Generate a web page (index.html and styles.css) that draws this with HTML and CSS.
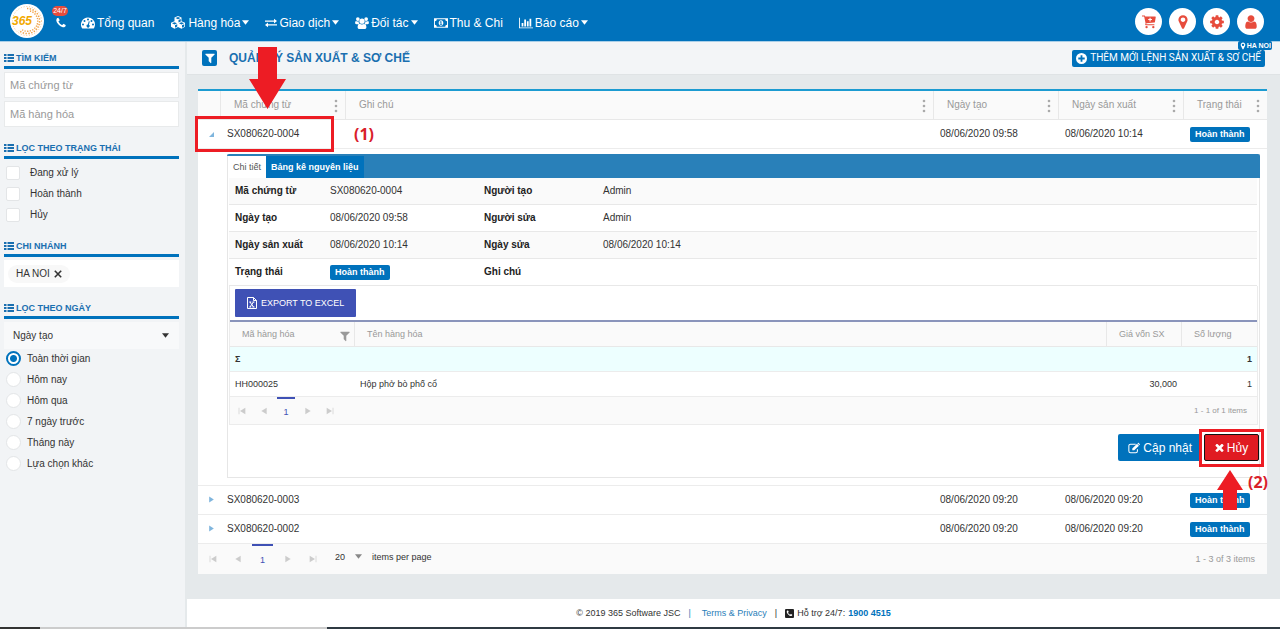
FILE: index.html
```html
<!DOCTYPE html>
<html lang="vi">
<head>
    <meta charset="UTF-8">
    <meta name="viewport" content="width=device-width, initial-scale=1.0">
    <title>Quản lý sản xuất &amp; sơ chế</title>
    <link rel="stylesheet" href="styles.css">
</head>
<body>

<!-- Icons -->
<svg class="sprite" aria-hidden="true">
    <symbol id="i-phone" viewBox="0 0 1792 1792"><path d="M1600 1240q0 27-10 70.5t-21 68.5q-21 50-122 106-94 51-186 51-27 0-53-3.5t-57-12.5-47-14.5-55.5-20.5-49.5-18q-98-35-175-83-127-79-264-216t-216-264q-48-77-83-175-3-9-18-49.5t-20.5-55.5-14.5-47-12.5-57-3.5-53q0-92 51-186 56-101 106-122 25-11 68.5-21t70.5-10q14 0 21 3 18 6 53 76 11 19 30 54t35 63.5 31 53.5q3 4 17.5 25t21.5 35.5 7 28.5q0 20-28.5 50t-62 55-62 53-28.5 46q0 9 5 22.5t8.5 20.5 14 24 11.5 19q76 137 174 235t235 174q2 1 19 11.5t24 14 20.5 8.5 22.5 5q18 0 46-28.5t53-62 55-62 50-28.5q14 0 28.5 7t35.5 21.5 25 17.5q25 15 53.5 31t63.5 35 54 30q70 35 76 53 3 7 3 21z"/></symbol>
    <symbol id="i-marker" viewBox="0 0 1792 1792"><path d="M1152 640q0-106-75-181t-181-75-181 75-75 181 75 181 181 75 181-75 75-181zm256 0q0 109-33 179l-364 774q-16 33-47.5 52t-67.5 19-67.5-19-46.5-52l-365-774q-33-70-33-179 0-212 150-362t362-150 362 150 150 362z"/></symbol>
    <symbol id="i-filter" viewBox="0 0 1792 1792"><path d="M1595 295q17 41-14 70l-493 493v742q0 42-39 59-13 5-25 5-27 0-45-19l-256-256q-19-19-19-45v-486l-493-493q-31-29-14-70 17-39 59-39h1280q42 0 59 39z"/></symbol>
    <symbol id="i-user" viewBox="0 0 1792 1792"><path d="M1536 1399q0 109-62.5 187t-150.5 78h-854q-88 0-150.5-78t-62.5-187q0-85 8.5-160.5t31.5-152 58.5-131 94-89 134.5-34.5q131 128 313 128t313-128q76 0 134.5 34.5t94 89 58.5 131 31.5 152 8.5 160.5zm-256-887q0 159-112.5 271.5t-271.5 112.5-271.5-112.5-112.5-271.5 112.5-271.5 271.5-112.5 271.5 112.5 112.5 271.5z"/></symbol>
    <symbol id="i-cog" viewBox="0 0 1792 1792"><path d="M1152 896q0-106-75-181t-181-75-181 75-75 181 75 181 181 75 181-75 75-181zm512-109v222q0 12-8 23t-20 13l-185 28q-19 54-39 91 35 50 107 138 10 12 10 25t-9 23q-27 37-99 108t-94 71q-12 0-26-9l-138-108q-44 23-91 38-16 136-29 186-7 28-36 28h-222q-14 0-24.5-8.5t-11.5-21.5l-28-184q-49-16-90-37l-141 107q-10 9-25 9-14 0-25-11-126-114-165-168-7-10-7-23 0-12 8-23 15-21 51-66.5t54-70.5q-27-50-41-99l-183-27q-13-2-21-12.5t-8-23.5v-222q0-12 8-23t19-13l186-28q14-46 39-92-40-57-107-138-10-12-10-24 0-10 9-23 26-36 98.5-107.5t94.5-71.5q13 0 26 10l138 107q44-23 91-38 16-136 29-186 7-28 36-28h222q14 0 24.5 8.5t11.5 21.5l28 184q49 16 90 37l142-107q9-9 24-9 13 0 25 10 129 119 165 170 7 8 7 22 0 12-8 23-15 21-51 66.5t-54 70.5q26 50 41 98l183 28q13 2 21 12.5t8 23.5z"/></symbol>
    <symbol id="i-times" viewBox="238 238 1316 1316"><path d="M1490 1322q0 40-28 68l-136 136q-28 28-68 28t-68-28l-294-294-294 294q-28 28-68 28t-68-28l-136-136q-28-28-28-68t28-68l294-294-294-294q-28-28-28-68t28-68l136-136q28-28 68-28t68 28l294 294 294-294q28-28 68-28t68 28l136 136q28 28 28 68t-28 68l-294 294 294 294q28 28 28 68z"/></symbol>
    <symbol id="i-chart" viewBox="0 128 2048 1536"><path d="M640 896v512h-256v-512h256zm384-512v1024h-256v-1024h256zm1024 1152v128h-2048v-1536h128v1408h1920zm-640-896v768h-256v-768h256zm384-384v1152h-256v-1152h256z"/></symbol>
    <symbol id="i-list" viewBox="0 0 20 16"><path d="M0 0h5v4H0zM7 0h13v4H7zM0 6h5v4H0zM7 6h13v4H7zM0 12h5v4H0zM7 12h13v4H7z"/></symbol>
    <symbol id="i-caret" viewBox="0 0 8 5"><path d="M0 0h8L4 5z"/></symbol>
    <symbol id="i-dash" viewBox="0 0 28 24"><path fill-rule="evenodd" d="M14 1a14 14 0 0 1 14 14c0 3-1 5.500-2.200 7.500-.3.400-.7.500-1.200.500H3.400c-.5 0-.9-.1-1.200-.5A14 14 0 0 1 14 1zM4 13a2 2 0 1 0 0 4 2 2 0 0 0 0-4zM7 6a2 2 0 1 0 0 4 2 2 0 0 0 0-4zM14 3a2 2 0 1 0 0 4 2 2 0 0 0 0-4zM21 6a2 2 0 1 0 0 4 2 2 0 0 0 0-4zM24 13a2 2 0 1 0 0 4 2 2 0 0 0 0-4zM15.500 8.500l-1.700 6.500a3 3 0 1 0 2 .5l1.700-6.500z"/></symbol>
    <symbol id="i-cubes" viewBox="0 0 32 28"><path fill-rule="evenodd" d="M16 0l7 3v7.500l7 3v8l-7 4-7-3.500-7 3.500-7-4v-8l7-3V3zM11 4l5 2.300L21 4l-5-2zM17 8v5l4.500-2.200V6zM4 14.500l5 2.300 5-2.300-5-2zM18 14.500l5 2.300 5-2.300-5-2zM10 18.500v5l4.500-2.300v-4.800zM24 18.500v5l4.500-2.300v-4.800z"/></symbol>
    <symbol id="i-exchange" viewBox="0 0 28 20"><path d="M0 4h21V0l7 5.500L21 11V7H0zM28 13H7V9l-7 5.500L7 20v-4h21z"/></symbol>
    <symbol id="i-users" viewBox="0 0 30 26"><circle cx="6" cy="4.500" r="4"/><circle cx="24" cy="4.500" r="4"/><circle cx="15" cy="9" r="5.600"/><path d="M2 8.500c3 1.500 5 1.500 6 .5-.5 3 .5 5 2 6.500H3c-2 0-3-1-3-2.500 0-2 .6-4 2-4.500zM28 8.500c-3 1.500-5 1.500-6 .5.500 3-.5 5-2 6.500h7c2 0 3-1 3-2.500 0-2-.6-4-2-4.500zM10 14.500c3 2 7 2 10 0 3.500.5 4.500 4 4.500 7.500 0 2.500-1.500 4-4 4h-11c-2.500 0-4-1.500-4-4 0-3.500 1-7 4.500-7.500z"/></symbol>
    <symbol id="i-money" viewBox="0 0 30 20"><path fill-rule="evenodd" d="M0 0h30v20H0zM6 2a4 4 0 0 1-4 4v8a4 4 0 0 1 4 4h18a4 4 0 0 1 4-4V6a4 4 0 0 1-4-4zM15 4c3 0 5 3 5 6s-2 6-5 6-5-3-5-6 2-6 5-6zM14 6.500l-2 1.500 1 1 1-.5V12h-1.500v1.500h5V12H16V6.500z"/></symbol>
    <symbol id="i-cart" viewBox="0 0 26 24"><path fill-rule="evenodd" d="M0 0h4.500c1 0 1.300.8 1.500 2h18.500c.8 0 1.200.5 1 1.200l-1.500 8.800c-.1.700-.5 1-1 1L8 14.500 8 16h15v2H7c-1 0-1.500-.8-1-1.700l.7-1.600L4 2H0zM14 4v2.500h-2.500v2H14V11h2V8.500h2.500v-2H16V4z"/><circle cx="8.500" cy="21.500" r="2.200"/><circle cx="21" cy="21.500" r="2.200"/></symbol>
    <symbol id="i-plus" viewBox="0 0 24 24"><path fill-rule="evenodd" d="M12 0a12 12 0 1 1 0 24 12 12 0 0 1 0-24zM10 5v5H5v4h5v5h4v-5h5v-4h-5V5z"/></symbol>
    <symbol id="i-edit" viewBox="0 0 28 24"><path fill="none" stroke="currentColor" stroke-width="2.400" d="M18 3H6a4 4 0 0 0-4 4v12a4 4 0 0 0 4 4h12a4 4 0 0 0 4-4v-4"/><path d="M10 13L21 2l4.500 4.500-11 11H10zM22 1l1-.7c.6-.4 1.300-.4 1.800 0l2.600 2.600c.5.500.5 1.300 0 1.800l-1 1z"/></symbol>
    <symbol id="i-excel" viewBox="0 0 20 24"><path fill="none" stroke="currentColor" stroke-width="2" d="M1 1h12l6 6v16H1zM13 1v6h6M6 10l7 10M13 10L6 20M4.500 10h4M11 10h4M4.500 20h4M11 20h4"/></symbol>
    <symbol id="i-first" viewBox="0 0 12 12"><path d="M1 1h1v10H1zM11 1v10L3 6z"/></symbol>
    <symbol id="i-prev" viewBox="0 0 12 12"><path d="M10 1v10L2 6z"/></symbol>
    <symbol id="i-next" viewBox="0 0 12 12"><path d="M2 1v10l8-5z"/></symbol>
    <symbol id="i-last" viewBox="0 0 12 12"><path d="M10 1h1v10h-1zM1 1v10l8-5z"/></symbol>
    <symbol id="i-open" viewBox="0 0 10 10"><path d="M10 0v10H0z"/></symbol>
    <symbol id="i-dots" viewBox="0 0 4 14"><circle cx="2" cy="2" r="1.300"/><circle cx="2" cy="7" r="1.300"/><circle cx="2" cy="12" r="1.300"/></symbol>
</svg>

<header class="topbar">
    <a class="logo" href="#" aria-label="365">
        <svg viewBox="0 0 34 34">
            <circle cx="17" cy="17" r="17" fill="#fff"/>
            <g fill="none" stroke="#f0a24a">
                <circle cx="17" cy="17" r="14.500" stroke-width="1" stroke-dasharray="1 1.800" opacity=".6"/>
                <path d="M17 4.500a12.500 12.500 0 1 1-8 22" stroke-width="1.500" stroke-dasharray="1.400 1.400"/>
                <path d="M20 7a10.300 10.300 0 1 1-9 18" stroke-width="1.400" stroke-dasharray="1.300 1.300"/>
            </g>
            <text x="2" y="21" class="logo-text">365</text>
        </svg>
    </a>
    <a class="hotline" href="#" aria-label="Hỗ trợ 24/7"><span class="hotline-badge">24/7</span><svg class="icon s12"><use href="#i-phone"/></svg></a>
    <nav class="menu">
        <a href="#"><svg class="icon w14"><use href="#i-dash"/></svg>Tổng quan</a>
        <a href="#"><svg class="icon w16"><use href="#i-cubes"/></svg>Hàng hóa<svg class="icon caret"><use href="#i-caret"/></svg></a>
        <a href="#"><svg class="icon w12"><use href="#i-exchange"/></svg>Giao dịch<svg class="icon caret"><use href="#i-caret"/></svg></a>
        <a href="#"><svg class="icon w14"><use href="#i-users"/></svg>Đối tác<svg class="icon caret"><use href="#i-caret"/></svg></a>
        <a href="#"><svg class="icon w14"><use href="#i-money"/></svg>Thu &amp; Chi</a>
        <a href="#"><svg class="icon w14"><use href="#i-chart"/></svg>Báo cáo<svg class="icon caret"><use href="#i-caret"/></svg></a>
    </nav>
    <div class="tools">
        <button aria-label="Giỏ hàng"><svg class="icon s14"><use href="#i-cart"/></svg></button>
        <button aria-label="Chi nhánh"><svg class="icon s16"><use href="#i-marker"/></svg></button>
        <button aria-label="Cài đặt"><svg class="icon s16"><use href="#i-cog"/></svg></button>
        <button aria-label="Tài khoản"><svg class="icon s16"><use href="#i-user"/></svg></button>
    </div>
    <span class="branch"><svg class="icon s8"><use href="#i-marker"/></svg>HA NOI</span>
</header>

<div class="layout">
    <aside class="sidebar">
        <section>
            <h2><svg class="icon list"><use href="#i-list"/></svg>TÌM KIẾM</h2>
            <input class="field" type="text" placeholder="Mã chứng từ" aria-label="Mã chứng từ">
            <input class="field" type="text" placeholder="Mã hàng hóa" aria-label="Mã hàng hóa">
        </section>
        <section>
            <h2><svg class="icon list"><use href="#i-list"/></svg>LỌC THEO TRẠNG THÁI</h2>
            <label class="check"><input type="checkbox">Đang xử lý</label>
            <label class="check"><input type="checkbox">Hoàn thành</label>
            <label class="check"><input type="checkbox">Hủy</label>
        </section>
        <section>
            <h2><svg class="icon list"><use href="#i-list"/></svg>CHI NHÁNH</h2>
            <div class="tags">
                <span class="tag">HA NOI<button aria-label="Xóa HA NOI"><svg viewBox="0 0 10 10"><path d="M1 1l8 8M9 1L1 9"/></svg></button></span>
            </div>
        </section>
        <section>
            <h2><svg class="icon list"><use href="#i-list"/></svg>LỌC THEO NGÀY</h2>
            <div class="select">
                <select aria-label="Lọc theo ngày"><option>Ngày tạo</option></select>
                <svg class="icon caret"><use href="#i-caret"/></svg>
            </div>
            <label class="radio"><input type="radio" name="range" checked>Toàn thời gian</label>
            <label class="radio"><input type="radio" name="range">Hôm nay</label>
            <label class="radio"><input type="radio" name="range">Hôm qua</label>
            <label class="radio"><input type="radio" name="range">7 ngày trước</label>
            <label class="radio"><input type="radio" name="range">Tháng này</label>
            <label class="radio"><input type="radio" name="range">Lựa chọn khác</label>
        </section>
    </aside>

    <main class="main">
        <div class="titlebar">
            <button class="filter-btn" aria-label="Bộ lọc"><svg class="icon s12"><use href="#i-filter"/></svg></button>
            <h1>QUẢN LÝ SẢN XUẤT &amp; SƠ CHẾ</h1>
            <button class="add-btn"><svg class="icon s11"><use href="#i-plus"/></svg>THÊM MỚI LỆNH SẢN XUẤT &amp; SƠ CHẾ</button>
        </div>

        <div class="content">
            <table class="grid">
                <colgroup>
                    <col class="c-exp"><col class="c-code"><col><col class="c-date"><col class="c-date"><col class="c-status">
                </colgroup>
                <thead>
                    <tr>
                        <th></th>
                        <th>Mã chứng từ<svg class="dots"><use href="#i-dots"/></svg></th>
                        <th>Ghi chú<svg class="dots"><use href="#i-dots"/></svg></th>
                        <th>Ngày tạo<svg class="dots"><use href="#i-dots"/></svg></th>
                        <th>Ngày sản xuất<svg class="dots"><use href="#i-dots"/></svg></th>
                        <th>Trạng thái<svg class="dots"><use href="#i-dots"/></svg></th>
                    </tr>
                </thead>
                <tbody>
                    <tr>
                        <td class="exp">
                            <button aria-label="Thu gọn"><svg class="icon s5"><use href="#i-open"/></svg></button>
                            <div class="step step-1">
                                <svg class="arrow" viewBox="0 0 37 62"><path d="M9 0h19v32h9L18.500 62 0 32h9z"/></svg>
                                <span>(1)</span>
                            </div>
                        </td>
                        <td>SX080620-0004</td><td></td><td>08/06/2020 09:58</td><td>08/06/2020 10:14</td>
                        <td><span class="badge">Hoàn thành</span></td>
                    </tr>
                    <tr>
                        <td class="detail-cell" colspan="6">
                            <div class="detail">
                                <div class="tabs">
                                    <button class="active">Chi tiết</button>
                                    <button>Bảng kê nguyên liệu</button>
                                </div>
                                <table class="info">
                                    <tr><th>Mã chứng từ</th><td>SX080620-0004</td><th>Người tạo</th><td>Admin</td></tr>
                                    <tr><th>Ngày tạo</th><td>08/06/2020 09:58</td><th>Người sửa</th><td>Admin</td></tr>
                                    <tr><th>Ngày sản xuất</th><td>08/06/2020 10:14</td><th>Ngày sửa</th><td>08/06/2020 10:14</td></tr>
                                    <tr><th>Trạng thái</th><td><span class="badge">Hoàn thành</span></td><th>Ghi chú</th><td></td></tr>
                                </table>
                                <div class="subgrid">
                                    <div class="toolbar">
                                        <button class="export"><svg class="icon"><use href="#i-excel"/></svg>EXPORT TO EXCEL</button>
                                    </div>
                                    <table class="items">
                                        <colgroup><col class="c-item"><col><col class="c-num"><col class="c-num"></colgroup>
                                        <thead>
                                            <tr><th>Mã hàng hóa<svg class="icon s12 funnel"><use href="#i-filter"/></svg></th><th>Tên hàng hóa</th><th>Giá vốn SX</th><th>Số lượng</th></tr>
                                        </thead>
                                        <tbody>
                                            <tr class="sum"><td>Σ</td><td></td><td></td><td class="num">1</td></tr>
                                            <tr><td>HH000025</td><td>Hộp phở bò phố cổ</td><td class="num">30,000</td><td class="num">1</td></tr>
                                        </tbody>
                                    </table>
                                    <div class="pager small">
                                        <button aria-label="Trang đầu"><svg class="icon s8"><use href="#i-first"/></svg></button>
                                        <button aria-label="Trang trước"><svg class="icon s8"><use href="#i-prev"/></svg></button>
                                        <button class="current">1</button>
                                        <button aria-label="Trang sau"><svg class="icon s8"><use href="#i-next"/></svg></button>
                                        <button aria-label="Trang cuối"><svg class="icon s8"><use href="#i-last"/></svg></button>
                                        <span class="count">1 - 1 of 1 items</span>
                                    </div>
                                </div>
                                <div class="actions">
                                    <button class="update"><svg class="icon w12"><use href="#i-edit"/></svg>Cập nhật</button>
                                    <div class="cancel-wrap">
                                        <button class="cancel"><svg class="icon s9"><use href="#i-times"/></svg>Hủy</button>
                                        <div class="step step-2">
                                            <svg class="arrow" viewBox="0 0 26 40"><path d="M13 0l13 20h-6v20H6V20H0z"/></svg>
                                            <span>(2)</span>
                                        </div>
                                    </div>
                                </div>
                            </div>
                        </td>
                    </tr>
                    <tr>
                        <td class="exp"><button aria-label="Mở rộng"><svg class="icon s7"><use href="#i-next"/></svg></button></td>
                        <td>SX080620-0003</td><td></td><td>08/06/2020 09:20</td><td>08/06/2020 09:20</td>
                        <td><span class="badge">Hoàn thành</span></td>
                    </tr>
                    <tr>
                        <td class="exp"><button aria-label="Mở rộng"><svg class="icon s7"><use href="#i-next"/></svg></button></td>
                        <td>SX080620-0002</td><td></td><td>08/06/2020 09:20</td><td>08/06/2020 09:20</td>
                        <td><span class="badge">Hoàn thành</span></td>
                    </tr>
                </tbody>
            </table>
            <div class="pager">
                <button aria-label="Trang đầu"><svg class="icon s8"><use href="#i-first"/></svg></button>
                <button aria-label="Trang trước"><svg class="icon s8"><use href="#i-prev"/></svg></button>
                <button class="current">1</button>
                <button aria-label="Trang sau"><svg class="icon s8"><use href="#i-next"/></svg></button>
                <button aria-label="Trang cuối"><svg class="icon s8"><use href="#i-last"/></svg></button>
                <label class="per-page">
                    <span class="select"><select><option>20</option></select><svg class="icon caret"><use href="#i-caret"/></svg></span>
                    items per page
                </label>
                <span class="count">1 - 3 of 3 items</span>
            </div>
        </div>

        <footer class="footer">
            <span>© 2019 365 Software JSC</span>
            <span class="bar">|</span>
            <a href="#">Terms &amp; Privacy</a>
            <span>|</span>
            <span class="support"><span class="phone-box"><svg class="icon"><use href="#i-phone"/></svg></span>Hỗ trợ 24/7: <a href="#"><b>1900 4515</b></a></span>
        </footer>
    </main>
</div>
<div class="bottom-line"></div>

</body>
</html>
```
FILE: styles.css
```css
* { box-sizing: border-box; }
body { margin: 0; min-height: 100vh; display: flex; flex-direction: column; font-family: "Liberation Sans", Arial, sans-serif; font-size: 10px; line-height: 14px; color: #333; background: #e5e9eb; }
button, input, select { font: inherit; color: inherit; margin: 0; padding: 0; border: 0; background: none; border-radius: 0; }
button { cursor: pointer; display: inline-flex; align-items: center; justify-content: center; }
a { color: #2a80b9; text-decoration: none; }
table { width: 100%; table-layout: fixed; border-spacing: 0; }
th { text-align: left; }

.sprite { position: absolute; width: 0; height: 0; }
.icon { fill: currentColor; flex: none; width: 12px; height: 12px; }
.s5 { width: 5px; height: 5px; }
.s7 { width: 7px; height: 7px; }
.s8 { width: 8px; height: 8px; }
.s9 { width: 9px; height: 9px; }
.s11 { width: 11px; height: 11px; }
.s12 { width: 12px; height: 12px; }
.s14 { width: 14px; height: 14px; }
.s16 { width: 16px; height: 16px; }
.w12 { width: 12px; }
.w14 { width: 14px; }
.w16 { width: 16px; height: 14px; }
.caret { width: 7px; height: 5px; }

/* Top bar */
.topbar { position: relative; display: flex; align-items: center; height: 42px; padding: 0 16px 0 10px; background: #0072bc; color: #fff; border-bottom: 1px solid #a9cfe8; }
.logo { display: flex; }
.logo svg { width: 34px; height: 34px; }
.logo-text { font: italic bold 12px "Liberation Sans", Arial, sans-serif; fill: #f2a900; }
.hotline { position: relative; display: flex; margin: 4px 0 0 11px; color: #fff; }
.hotline-badge { position: absolute; left: -3px; top: -11px; width: 16px; height: 10px; border-radius: 5px; background: #e74c3c; font-size: 7px; line-height: 10px; text-align: center; }
.menu { display: flex; gap: 16px; margin: 4px 0 0 14px; font-size: 12px; }
.menu a { display: flex; align-items: center; gap: 2px; color: #fff; }
.tools { display: flex; gap: 7px; margin: 2px 0 0 auto; }
.tools button { width: 27px; height: 27px; border-radius: 50%; background: #fff; color: #e74c3c; }
.branch { position: absolute; right: 8px; top: 41px; display: flex; align-items: center; height: 9px; padding: 0 1px; border-radius: 2px; background: #0072bc; font-size: 7px; font-weight: bold; line-height: 9px; z-index: 2; }

.layout { flex: 1; display: flex; }

/* Sidebar */
.sidebar { width: 187px; flex: none; padding: 10px 6px 10px 4px; background: #f2f4f6; border-right: 2px solid #e5e9eb; }
.sidebar section { margin-bottom: 15px; }
.sidebar section:last-child { margin-bottom: 0; }
.sidebar h2 { display: flex; align-items: center; gap: 2px; margin: 0 0 3px; height: 17px; padding-bottom: 3px; border-bottom: 3px solid #0072bc; color: #1a6fb0; font-size: 9px; }
.list { width: 10px; height: 8px; }
.field { display: block; width: 100%; height: 26px; margin-bottom: 3px; padding: 0 5px; background: #fff; border: 1px solid #e8eaeb; font-size: 11px; }
.field::placeholder { color: #999; opacity: 1; }
.check { display: flex; align-items: center; gap: 10px; height: 21px; padding-left: 2px; }
.check input { appearance: none; width: 14px; height: 14px; border: 1px solid #e3e5e7; border-radius: 2px; background: #fff; }
.tags { height: 27px; padding: 5px 4px; background: #fff; }
.tag { display: inline-flex; align-items: center; gap: 4px; height: 18px; padding: 0 8px; border-radius: 9px; background: #f8f8f8; }
.tag svg { width: 8px; height: 8px; fill: none; stroke: #333; stroke-width: 2; }
.select { position: relative; display: flex; align-items: center; }
.select select { appearance: none; width: 100%; }
.select .caret { position: absolute; right: 10px; pointer-events: none; }
.sidebar .select { height: 27px; background: #f8f9fa; margin-bottom: -1px; }
.sidebar .select select { height: 27px; padding-left: 9px; }
.radio { display: flex; align-items: center; gap: 6px; height: 21px; padding-left: 2px; }
.radio input { appearance: none; width: 15px; height: 15px; border: 1px solid #e3e5e7; border-radius: 50%; background: #fff; }
.radio input:checked { border: 2px solid #0072bc; background: radial-gradient(#0072bc 0 3px, #fff 4px); }

/* Title bar */
.main { flex: 1; min-width: 0; display: flex; flex-direction: column; }
.titlebar { display: flex; align-items: center; height: 33px; padding: 0 15px; background: #f3f5f7; border-bottom: 1px solid #dfe3e5; }
.filter-btn { width: 15px; height: 16px; border-radius: 2px; background: #0072bc; color: #fff; }
.titlebar h1 { margin: 0 0 0 12px; font-size: 12px; color: #1a6fb0; }
.add-btn { gap: 3px; height: 17px; margin-left: auto; padding: 0 4px; border-radius: 2px; background: #0072bc; color: #fff; font-family: Roboto, sans-serif; }

/* Main grid */
.content { margin: 14px 13px 25px 11px; background: #fff; }
.c-exp { width: 23px; }
.c-code { width: 125px; }
.c-date { width: 125px; }
.c-status { width: 83px; }
.grid { border-top: 2px solid #1c9bd1; }
.grid > thead th { position: relative; height: 29px; padding: 0 0 0 13px; background: #fafafa; border-right: 1px solid #e8e8e8; border-bottom: 1px solid #e8e8e8; color: #999; font-weight: normal; }
.grid > thead th:last-child { border-right: 0; }
.dots { position: absolute; right: 7px; top: 8px; width: 4px; height: 14px; fill: #aaa; }
.grid > tbody > tr > td { height: 29px; padding: 0 0 0 6px; border-bottom: 1px solid #ececec; }
.grid > tbody > tr > .exp { position: relative; padding: 0 0 0 3px; text-align: center; color: #7fb5dd; }
.badge { display: inline-block; height: 15px; padding: 0 5px; border-radius: 2px; background: #0072bc; color: #fff; font-size: 9px; line-height: 15px; font-weight: bold; vertical-align: middle; }

/* Detail row */
.grid > tbody > tr > .detail-cell { padding: 5px 7px 7px 29px; }
.detail { border: 1px solid #e6e6e6; border-top: 0; }
.tabs { display: flex; height: 24px; margin: 0 -1px; padding-top: 2px; border-radius: 2px 2px 0 0; background: #2980b9; font-size: 9px; }
.tabs button { padding: 0 5px; background: #0072bc; color: #fff; font-weight: bold; }
.tabs .active { background: #fff; color: #555; font-weight: normal; border-left: 1px solid #e6e6e6; }
.info { width: calc(100% - 3px); margin: 0 2px 0 1px; }
.info th, .info td { height: 27px; padding: 0 0 0 6px; border-bottom: 1px solid #e8e8e8; }
.info th { color: #222; }
.info tr:nth-child(odd) > * { background: #fafafa; }
.info th:first-child { width: 95px; }
.info td:nth-child(2) { width: 154px; }
.info th:nth-child(3) { width: 119px; }
.subgrid { margin: 0 1px; border: 1px solid #ececec; border-top: 0; font-size: 9px; }
.toolbar { padding: 3px 5px; }
.export { gap: 3px; height: 28px; padding: 0 12px 0 11px; border-radius: 1px; background: #3f51b5; color: #fff; }
.items { border-top: 2px solid #8a94bb; }
.c-item { width: 125px; }
.c-num { width: 75px; }
.items th { position: relative; height: 25px; padding: 0 0 0 12px; background: #fafafa; border-right: 1px solid #e8e8e8; border-bottom: 1px solid #e8e8e8; color: #999; font-weight: normal; }
.items th:last-child { border-right: 0; }
.items td { height: 25px; padding: 0 5px; border-bottom: 1px solid #ececec; }
.items .sum td { background: #edffff; font-weight: bold; }
.items .num { text-align: right; }
.funnel { position: absolute; right: 3px; top: 8px; color: #999; }

.pager { display: flex; align-items: stretch; height: 30px; padding: 0 12px 0 2px; background: #fafafa; font-size: 9px; }
.pager button { width: 25px; color: #ccc; }
.pager .current { width: 21px; margin: 0 2px; border-top: 2px solid #3f51b5; color: #3f51b5; }
.pager .count { margin-left: auto; align-self: center; color: #999; }
.per-page { display: flex; gap: 10px; align-items: center; margin-left: 10px; padding-bottom: 5px; }
.per-page select { width: 27px; }
.per-page .select .caret { right: 0; color: #888; }
.per-page .select select { padding-right: 12px; }
.pager.small { height: 27px; padding: 0 10px 0 1px; font-size: 8px; }
.pager.small button { width: 22px; }
.pager.small .current { width: 18px; font-size: 9px; }

.actions { display: flex; justify-content: flex-end; padding: 9px 0 16px; }
.actions button { height: 27px; color: #fff; gap: 3px; }
.update { padding: 0 8px 0 10px; border-radius: 2px 0 0 2px; background: #0072bc; font-size: 12px; }
.cancel-wrap { position: relative; margin-left: 4px; }
.actions .cancel { width: 55px; border: 1px solid #111; border-radius: 2px; background: #e01b22; font-size: 12px; }

/* Guide steps drawn over the grid */
.step { position: absolute; z-index: 3; border: 3px solid #ed1c24; color: #d9202a; font: bold 16px "Open Sans", sans-serif; pointer-events: none; }
.step .arrow { position: absolute; fill: #ed1c24; }
.step span { position: absolute; }
.step-1 { left: -3px; top: -4px; width: 139px; height: 36px; }
.step-1 .arrow { width: 37px; height: 62px; left: 51px; bottom: 40px; }
.step-1 span { left: 156px; top: 4px; }
.step-2 { left: -5px; top: -5px; width: 65px; height: 38px; }
.step-2 .arrow { width: 26px; height: 40px; left: 15px; top: 38px; }
.step-2 span { left: 46px; top: 39px; }

/* Footer */
.footer { display: flex; align-items: center; justify-content: center; gap: 8px; flex: 1; min-height: 28px; background: #fff; font-size: 9px; }
.footer .bar { color: #2a80b9; margin-right: 3px; }
.support { display: inline-flex; align-items: center; gap: 3px; }
.support a { color: #0072bc; }
.phone-box { display: inline-flex; padding: 1px; border-radius: 1px; background: #222; color: #fff; }
.phone-box .icon { width: 7px; height: 7px; }
.bottom-line { height: 2px; background: linear-gradient(90deg, #333 40px, #ccc 40px 327px, #2f3a42 327px); }
```
